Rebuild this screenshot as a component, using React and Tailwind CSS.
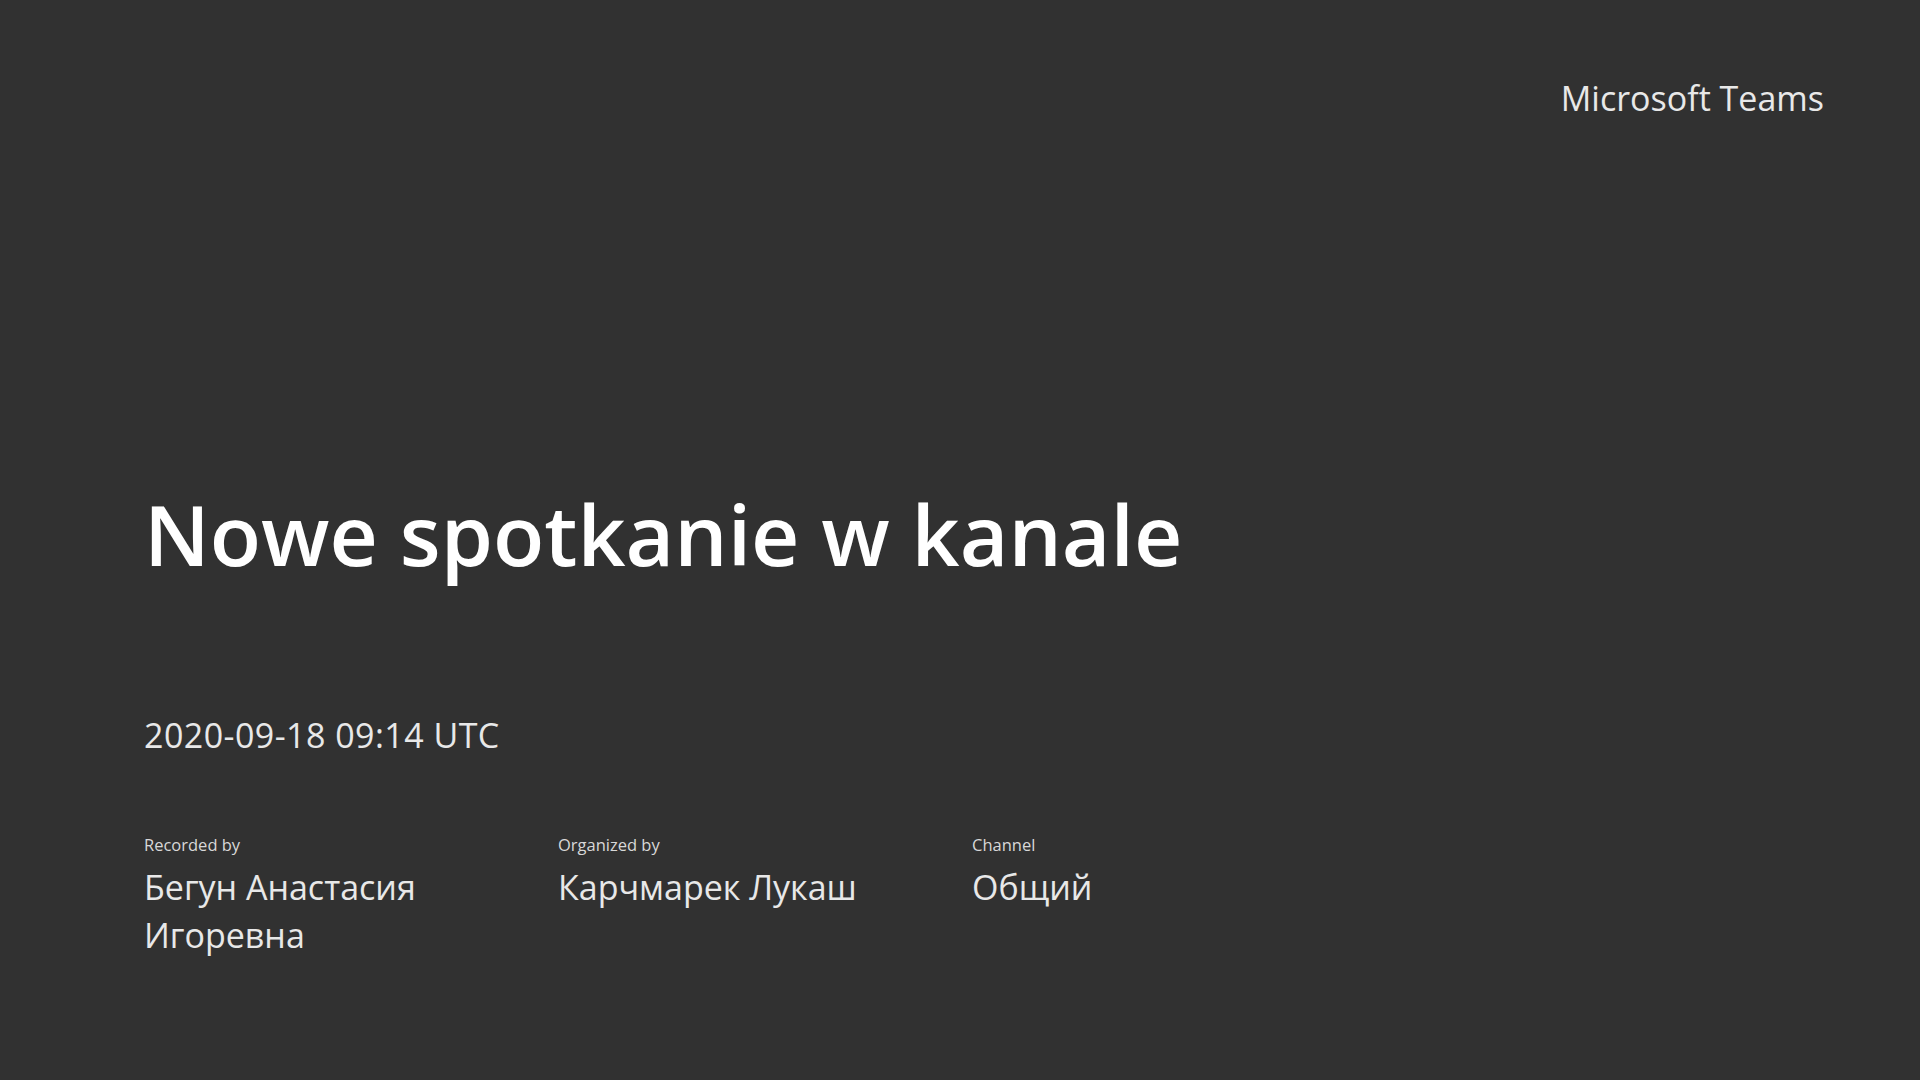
export default function App() {
  return (
    <div className="w-[1920px] h-[1080px] bg-[#313131] text-white overflow-hidden flex flex-col font-['Open_Sans','Noto_Sans',sans-serif] pl-[144px] pr-[96px]">
      <div className="pt-[74px] text-right text-[34px] leading-[48px] text-[#e8e8e8]">Microsoft Teams</div>
      <h1 className="mt-[358px] text-[84px] leading-[108px] font-semibold">Nowe spotkanie w kanale</h1>
      <div className="mt-[125px] text-[34px] leading-[44px] tracking-[0.45px] text-[#e8e8e8]">2020-09-18 09:14 UTC</div>
      <div className="mt-[76px] flex">
        <div className="w-[414px] pr-[100px]">
          <div className="text-[16.5px] leading-[24px] mb-[6px] text-[#d8d8d8]">Recorded by</div>
          <div className="text-[34px] leading-[48px] text-[#e8e8e8]">Бегун Анастасия Игоревна</div>
        </div>
        <div className="w-[414px]">
          <div className="text-[16.5px] leading-[24px] mb-[6px] text-[#d8d8d8]">Organized by</div>
          <div className="text-[34px] leading-[48px] text-[#e8e8e8]">Карчмарек Лукаш</div>
        </div>
        <div className="w-[300px]">
          <div className="text-[16.5px] leading-[24px] mb-[6px] text-[#d8d8d8]">Channel</div>
          <div className="text-[34px] leading-[48px] text-[#e8e8e8]">Общий</div>
        </div>
      </div>
    </div>
  );
}
